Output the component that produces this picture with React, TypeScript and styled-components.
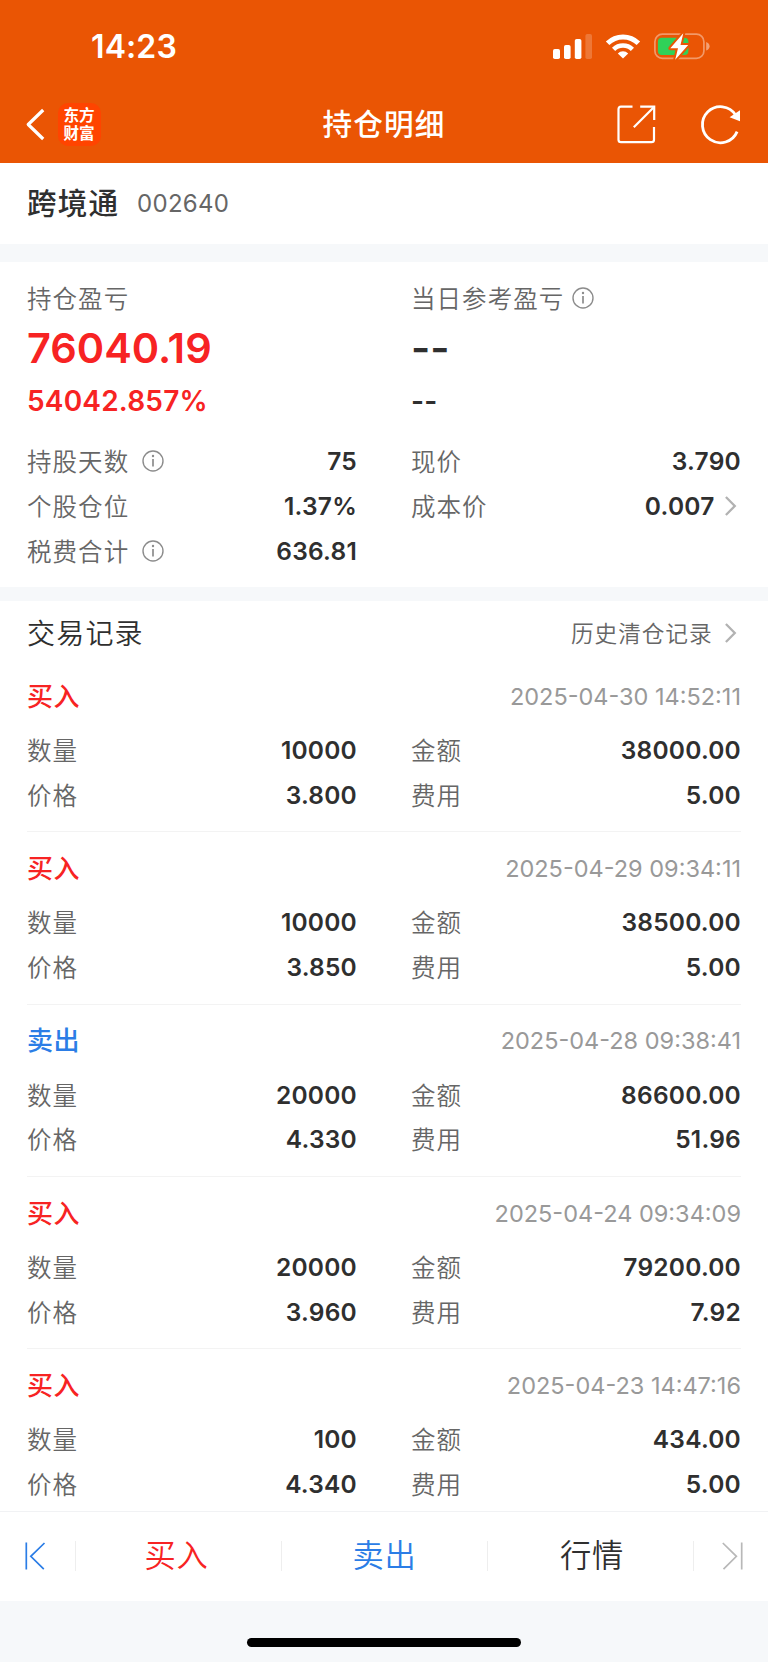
import React from 'react';
import styled, { createGlobalStyle } from 'styled-components';

const LATIN = 'Inter, "Noto Sans CJK SC", sans-serif';
const HAN = '"Noto Sans CJK SC", sans-serif';

const RED = '#f72323';
const BLUE = '#2b7de6';
const BRAND = '#ea5504';
const INK = '#2f2f2f';
const MUTED = '#666666';
const BAND = '#f6f8fa';

const GlobalStyle = createGlobalStyle`
  * { box-sizing: border-box; }
  body { margin: 0; background: #ffffff; }
  svg { display: block; flex: none; overflow: visible; }
`;

const Screen = styled.div`
  width: 768px;
  height: 1662px;
  display: flex;
  flex-direction: column;
  overflow: hidden;
  background: #ffffff;
  font-family: ${HAN};
  color: ${INK};
`;

const Header = styled.header`
  flex: none;
  height: 163.4px;
  background: ${BRAND};
  color: #ffffff;
`;

const StatusBar = styled.div`
  height: 86px;
  padding: 6px 58px 0 91px;
  display: flex;
  align-items: center;
  justify-content: space-between;
`;

const Clock = styled.time`
  padding-top: 2px;
  font: 600 32px/40px ${LATIN};
  letter-spacing: 0.1px;
`;

const StatusIcons = styled.div`
  display: flex;
  align-items: center;
  gap: 14px;
`;

const NavBar = styled.nav`
  height: 77px;
  padding: 0 27px 0 26px;
  display: grid;
  grid-template-columns: 1fr auto 1fr;
  align-items: center;
`;

const NavStart = styled.div`
  display: flex;
  align-items: center;
  gap: 13px;
`;

const NavEnd = styled.div`
  display: flex;
  align-items: center;
  justify-content: flex-end;
  gap: 45px;
`;

const Logo = styled.div`
  width: 43px;
  height: 43px;
  padding-bottom: 3px;
  border-radius: 10px;
  background: #ff4400;
  display: flex;
  align-items: center;
  justify-content: center;
  font: 700 15.6px/18px ${HAN};
`;

const PageTitle = styled.h1`
  margin: 0;
  padding: 0 0 3px 1px;
  font: 500 29.6px/40px ${HAN};
  letter-spacing: 1.1px;
`;

const StockBar = styled.section`
  flex: none;
  height: 81px;
  padding: 0 27px;
  display: flex;
  align-items: center;
  gap: 18px;
`;

const StockName = styled.h2`
  margin: 0;
  padding-bottom: 4px;
  font: 500 29.6px/40px ${HAN};
  letter-spacing: 1.1px;
`;

const StockCode = styled.span`
  font: 400 24px/40px ${LATIN};
  letter-spacing: 0.25px;
  color: ${MUTED};
`;

const Band = styled.div<{ $h: number }>`
  flex: none;
  height: ${(p) => p.$h}px;
  background: ${BAND};
`;

const Summary = styled.section`
  flex: none;
  height: 325px;
  padding: 14px 27px 0;
`;

const Columns = styled.div`
  display: grid;
  grid-template-columns: 330px 330px;
  column-gap: 54px;
`;

const Headline = styled.div`
  height: 163px;
  display: flex;
  flex-direction: column;
  align-items: flex-start;
`;

const Label = styled.span<{ $gap?: number }>`
  display: inline-flex;
  align-items: center;
  gap: ${(p) => p.$gap ?? 13}px;
  font: 350 24.5px/43px ${HAN};
  letter-spacing: 1.05px;
  color: ${MUTED};
`;

const LabelText = styled.span`
  padding-bottom: 1px;
`;

const BigFigure = styled.div<{ $color: string }>`
  font: 600 41.5px/56px ${LATIN};
  color: ${(p) => p.$color};
`;

const RateFigure = styled.div<{ $color: string }>`
  font: 600 28px/50px ${LATIN};
  letter-spacing: 0.2px;
  color: ${(p) => p.$color};
`;

const Cell = styled.div`
  height: 44.8px;
  display: flex;
  align-items: center;
  justify-content: space-between;
`;

const Value = styled.span`
  display: inline-flex;
  align-items: center;
  gap: 10.5px;
  font: 600 24.5px/44px ${LATIN};
  letter-spacing: 0.22px;
`;

const ChevronBox = styled.span`
  padding-right: 5px;
`;

const Records = styled.main`
  flex: none;
  height: 910px;
  padding: 0 27px;
  overflow: hidden;
`;

const RecordsHeader = styled.div`
  height: 59.3px;
  padding-top: 5px;
  display: flex;
  align-items: center;
  justify-content: space-between;
`;

const RecordsTitle = styled.h3`
  margin: 0;
  padding-bottom: 2px;
  font: 350 28px/40px ${HAN};
  letter-spacing: 1.2px;
`;

const HistoryLink = styled.a`
  display: flex;
  align-items: center;
  gap: 12.5px;
  font: 350 22.7px/40px ${HAN};
  letter-spacing: 0.9px;
  color: ${MUTED};
`;

const Record = styled.article`
  height: 172.2px;
  border-bottom: 1px solid #f3f3f3;
`;

const RecordTop = styled.div`
  height: 67.6px;
  padding-top: 5px;
  display: flex;
  align-items: center;
  justify-content: space-between;
`;

const Side = styled.strong<{ $color: string }>`
  padding-bottom: 3px;
  font: 500 26px/40px ${HAN};
  letter-spacing: 0.6px;
  color: ${(p) => p.$color};
`;

const Stamp = styled.time`
  padding-top: 1px;
  font: 400 23.5px/40px ${LATIN};
  color: #999999;
`;

const Footer = styled.footer`
  flex: none;
  height: 90px;
  border-top: 1px solid #f1f2f4;
  display: flex;
  align-items: center;
`;

const Pager = styled.button<{ $end?: boolean }>`
  width: ${(p) => (p.$end ? 74 : 75)}px;
  height: 88px;
  padding: 0 25px;
  border: 0;
  background: none;
  display: flex;
  align-items: center;
  justify-content: ${(p) => (p.$end ? 'flex-end' : 'flex-start')};
`;

const Action = styled.button<{ $color: string }>`
  flex: 1;
  height: 88px;
  padding: 0;
  border: 0;
  background: none;
  font: 350 31.3px/84px ${HAN};
  letter-spacing: 0.6px;
  color: ${(p) => p.$color};
`;

const ActionText = styled.span<{ $pad?: string }>`
  display: block;
  padding: ${(p) => p.$pad ?? '0 0 4px'};
`;

const Separator = styled.i`
  width: 1px;
  height: 30px;
  background: #eeeeee;
`;

const HomeArea = styled.div`
  flex: 1;
  background: ${BAND};
  display: flex;
  justify-content: center;
  align-items: flex-end;
  padding-bottom: 15px;
`;

const HomeIndicator = styled.div`
  width: 274px;
  height: 9px;
  border-radius: 5px;
  background: #000000;
`;

const Signal = () => (
  <svg width="39" height="25" viewBox="0 0 39 25" fill="#fff">
    <rect x="0" y="15" width="7" height="10" rx="1.8" />
    <rect x="11" y="11" width="6.6" height="14" rx="1.8" />
    <rect x="21.8" y="5" width="6.6" height="20" rx="1.8" />
    <rect x="32.4" y="0" width="6.6" height="25" rx="1.8" opacity="0.2" />
  </svg>
);

const Wifi = () => (
  <svg width="34" height="25" viewBox="0 0 34 25" fill="none" stroke="#fff">
    <path d="M1.6 9.2A22 22 0 0 1 32.4 9.2" strokeWidth="5" />
    <path d="M7.6 15.3A13.5 13.5 0 0 1 26.4 15.3" strokeWidth="4.6" />
    <path d="M17 24.6 11.8 19.4A7.4 7.4 0 0 1 22.2 19.4Z" fill="#fff" stroke="none" />
  </svg>
);

const Battery = () => (
  <svg width="56" height="27" viewBox="0 0 56 27">
    <rect x="0.9" y="1.2" width="49" height="24.2" rx="7.5" fill="none" stroke="#fff" strokeOpacity="0.4" strokeWidth="1.7" />
    <path d="M52.2 9V17.6C54 17 55.6 15.3 55.6 13.3C55.6 11.3 54 9.6 52.2 9Z" fill="#fff" fillOpacity="0.45" />
    <rect x="3.9" y="4.8" width="30.5" height="17.2" rx="4" fill="#30d158" />
    <path
      d="M29.3 0.3 16.3 15.2H24L21.2 26.8 34.2 11.9H26.5Z"
      fill="#fff"
      stroke={BRAND}
      strokeWidth="4"
      strokeLinejoin="round"
      paintOrder="stroke"
    />
  </svg>
);

const Back = () => (
  <svg width="18.5" height="31" viewBox="0 0 18.5 31" fill="none" stroke="#fff" strokeWidth="3.2">
    <path d="M17.2 1 2.2 15.5 17.2 30" strokeLinejoin="round" />
  </svg>
);

const Share = () => (
  <svg width="39" height="39" viewBox="0 0 39 39" fill="none" stroke="#fff" strokeWidth="2.2">
    <path d="M15.5 1.7H4Q1.5 1.7 1.5 4.2V34.7Q1.5 37.2 4 37.2H34.5Q37 37.2 37 34.7V22" />
    <path d="M23.2 1.7H37.2V15" />
    <path d="M16.8 22.3 36.5 2.4" />
  </svg>
);

const Refresh = () => (
  <svg width="40" height="39" viewBox="0 0 40 39" fill="none">
    <path d="M36.1 26.6A18 18 0 1 1 34.6 10" stroke="#fff" strokeWidth="2.8" />
    <path d="M39 5.2V16.3L28.6 12.3Z" fill="#fff" />
  </svg>
);

const Info = () => (
  <svg width="22" height="22" viewBox="0 0 22 22" fill="none" stroke="#8c8c8c" strokeWidth="1.4">
    <circle cx="11" cy="11" r="10" />
    <path d="M11 9V16.6" strokeWidth="1.7" />
    <circle cx="11" cy="6" r="1.2" fill="#8c8c8c" stroke="none" />
  </svg>
);

const Chevron = () => (
  <ChevronBox>
    <svg width="11" height="20" viewBox="0 0 11 20" fill="none" stroke="#b2b2b2" strokeWidth="2.3">
      <path d="M0.9 1 9.8 10 0.9 19" />
    </svg>
  </ChevronBox>
);

const FirstPage = () => (
  <svg width="21" height="28" viewBox="0 0 21 28" fill="none" stroke={BLUE} strokeWidth="1.7">
    <path d="M1.3 0.5V27.5M19.5 1 5.8 14.3 18.8 27.2" />
  </svg>
);

const LastPage = () => (
  <svg width="21" height="28" viewBox="0 0 21 28" fill="none" stroke="#b8b8b8" strokeWidth="1.7">
    <path d="M19.7 0.5V27.5M0.8 1 14.4 14.3 1.5 27.2" />
  </svg>
);

interface Trade {
  side: '买入' | '卖出';
  time: string;
  qty: string;
  amount: string;
  price: string;
  fee: string;
}

const trades: Trade[] = [
  { side: '买入', time: '2025-04-30 14:52:11', qty: '10000', amount: '38000.00', price: '3.800', fee: '5.00' },
  { side: '买入', time: '2025-04-29 09:34:11', qty: '10000', amount: '38500.00', price: '3.850', fee: '5.00' },
  { side: '卖出', time: '2025-04-28 09:38:41', qty: '20000', amount: '86600.00', price: '4.330', fee: '51.96' },
  { side: '买入', time: '2025-04-24 09:34:09', qty: '20000', amount: '79200.00', price: '3.960', fee: '7.92' },
  { side: '买入', time: '2025-04-23 14:47:16', qty: '100', amount: '434.00', price: '4.340', fee: '5.00' },
];

interface FieldProps {
  label: string;
  value: string;
  info?: boolean;
  link?: boolean;
}

const Field = ({ label, value, info, link }: FieldProps) => (
  <Cell>
    <Label>
      <LabelText>{label}</LabelText>
      {info && <Info />}
    </Label>
    <Value>
      {value}
      {link && <Chevron />}
    </Value>
  </Cell>
);

export default function App() {
  return (
    <Screen>
      <GlobalStyle />
      <Header>
        <StatusBar>
          <Clock>14:23</Clock>
          <StatusIcons>
            <Signal />
            <Wifi />
            <Battery />
          </StatusIcons>
        </StatusBar>
        <NavBar>
          <NavStart>
            <Back />
            <Logo>
              <span>
                东方
                <br />
                财富
              </span>
            </Logo>
          </NavStart>
          <PageTitle>持仓明细</PageTitle>
          <NavEnd>
            <Share />
            <Refresh />
          </NavEnd>
        </NavBar>
      </Header>

      <StockBar>
        <StockName>跨境通</StockName>
        <StockCode>002640</StockCode>
      </StockBar>
      <Band $h={17.6} />

      <Summary>
        <Columns>
          <Headline>
            <Label>
              <LabelText>持仓盈亏</LabelText>
            </Label>
            <BigFigure $color={RED}>76040.19</BigFigure>
            <RateFigure $color={RED}>54042.857%</RateFigure>
          </Headline>
          <Headline>
            <Label $gap={8}>
              <LabelText>当日参考盈亏</LabelText>
              <Info />
            </Label>
            <BigFigure $color={INK}>--</BigFigure>
            <RateFigure $color={INK}>--</RateFigure>
          </Headline>
          <Field label="持股天数" value="75" info />
          <Field label="现价" value="3.790" />
          <Field label="个股仓位" value="1.37%" />
          <Field label="成本价" value="0.007" link />
          <Field label="税费合计" value="636.81" info />
        </Columns>
      </Summary>
      <Band $h={14} />

      <Records>
        <RecordsHeader>
          <RecordsTitle>交易记录</RecordsTitle>
          <HistoryLink>
            历史清仓记录
            <Chevron />
          </HistoryLink>
        </RecordsHeader>
        {trades.map((t) => (
          <Record key={t.time}>
            <RecordTop>
              <Side $color={t.side === '买入' ? RED : BLUE}>{t.side}</Side>
              <Stamp>{t.time}</Stamp>
            </RecordTop>
            <Columns>
              <Field label="数量" value={t.qty} />
              <Field label="金额" value={t.amount} />
              <Field label="价格" value={t.price} />
              <Field label="费用" value={t.fee} />
            </Columns>
          </Record>
        ))}
      </Records>

      <Footer>
        <Pager aria-label="上一只">
          <FirstPage />
        </Pager>
        <Separator />
        <Action $color={RED}>
          <ActionText $pad="0 4px 4px 0">买入</ActionText>
        </Action>
        <Separator />
        <Action $color={BLUE}>
          <ActionText>卖出</ActionText>
        </Action>
        <Separator />
        <Action $color={INK}>
          <ActionText $pad="0 0 4px 3px">行情</ActionText>
        </Action>
        <Separator />
        <Pager $end aria-label="下一只">
          <LastPage />
        </Pager>
      </Footer>
      <HomeArea>
        <HomeIndicator />
      </HomeArea>
    </Screen>
  );
}
